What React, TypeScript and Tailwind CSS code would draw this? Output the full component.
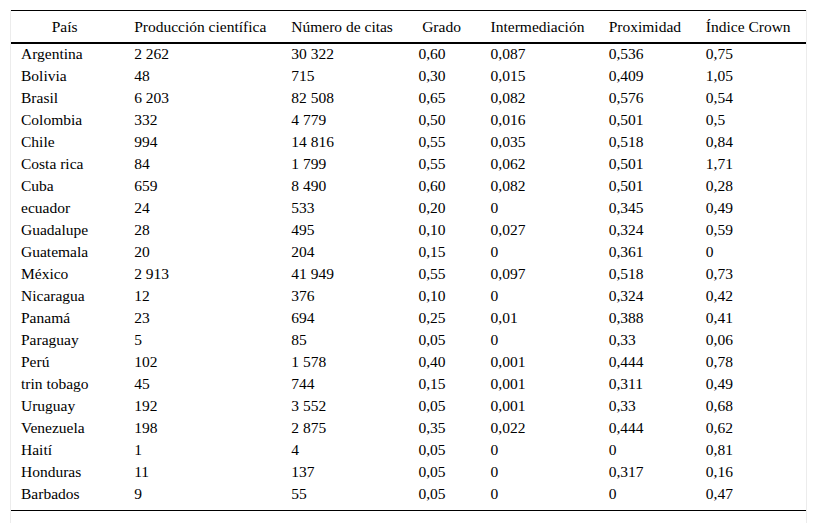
const HEADERS = ['País', 'Producción científica', 'Número de citas', 'Grado', 'Intermediación', 'Proximidad', 'Índice Crown'];
const WIDTHS = ['w-[113px]', 'w-[157px]', 'w-[127px]', 'w-[72px]', 'w-[118px]', 'w-[97px]', 'w-[110px]'];

const ROWS: string[][] = [
  ['Argentina', '2 262', '30 322', '0,60', '0,087', '0,536', '0,75'],
  ['Bolivia', '48', '715', '0,30', '0,015', '0,409', '1,05'],
  ['Brasil', '6 203', '82 508', '0,65', '0,082', '0,576', '0,54'],
  ['Colombia', '332', '4 779', '0,50', '0,016', '0,501', '0,5'],
  ['Chile', '994', '14 816', '0,55', '0,035', '0,518', '0,84'],
  ['Costa rica', '84', '1 799', '0,55', '0,062', '0,501', '1,71'],
  ['Cuba', '659', '8 490', '0,60', '0,082', '0,501', '0,28'],
  ['ecuador', '24', '533', '0,20', '0', '0,345', '0,49'],
  ['Guadalupe', '28', '495', '0,10', '0,027', '0,324', '0,59'],
  ['Guatemala', '20', '204', '0,15', '0', '0,361', '0'],
  ['México', '2 913', '41 949', '0,55', '0,097', '0,518', '0,73'],
  ['Nicaragua', '12', '376', '0,10', '0', '0,324', '0,42'],
  ['Panamá', '23', '694', '0,25', '0,01', '0,388', '0,41'],
  ['Paraguay', '5', '85', '0,05', '0', '0,33', '0,06'],
  ['Perú', '102', '1 578', '0,40', '0,001', '0,444', '0,78'],
  ['trin tobago', '45', '744', '0,15', '0,001', '0,311', '0,49'],
  ['Uruguay', '192', '3 552', '0,05', '0,001', '0,33', '0,68'],
  ['Venezuela', '198', '2 875', '0,35', '0,022', '0,444', '0,62'],
  ['Haití', '1', '4', '0,05', '0', '0', '0,81'],
  ['Honduras', '11', '137', '0,05', '0', '0,317', '0,16'],
  ['Barbados', '9', '55', '0,05', '0', '0', '0,47'],
];

export default function App() {
  return (
    <div className="min-h-screen bg-white pl-[10px] pt-[10px] font-['Liberation_Serif',serif]">
      <div className="w-[797px] h-[513px] border-x border-[#ececec]">
        <table className="w-[795px] table-fixed border-collapse font-['Liberation_Serif',serif] text-[15.5px] leading-none text-black">
          <thead>
            <tr className="border-t border-black border-b-2">
              {HEADERS.map((h, i) => (
                <th key={h} className={`${WIDTHS[i]} h-[32px] pl-[10px] pr-[16px] text-center font-normal whitespace-nowrap`}>
                  {h}
                </th>
              ))}
            </tr>
          </thead>
          <tbody className="border-b border-black">
            {ROWS.map((row, r) => (
              <tr key={row[0]}>
                {row.map((cell, i) => (
                  <td key={i} className={`px-[10px] text-left whitespace-nowrap ${r === ROWS.length - 1 ? 'h-[28px] pb-[6px]' : 'h-[22px]'}`}>
                    {cell}
                  </td>
                ))}
              </tr>
            ))}
          </tbody>
        </table>
      </div>
    </div>
  );
}
